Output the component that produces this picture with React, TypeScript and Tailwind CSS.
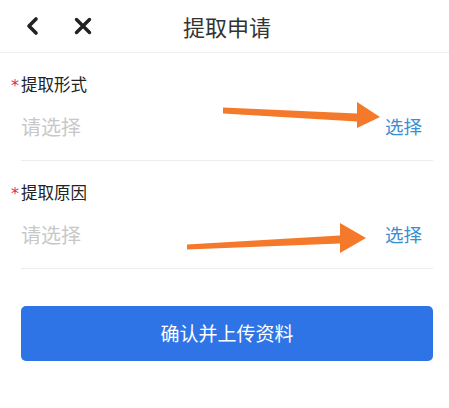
import React from 'react';

const font = { fontFamily: '"Noto Sans CJK SC", "Noto Sans", sans-serif' };

interface FieldProps {
  label: string;
}

const Field: React.FC<FieldProps> = ({ label }) => {
  return (
    <div className="pt-[19px] pb-[13px] border-b border-[#ececec]">
      <div className="flex items-center h-6 -ml-[12px]">
        <span className="w-[12px] text-[16px] text-[#d9304f] leading-none pt-[4px] text-center" style={{ fontFamily: '"DejaVu Sans", sans-serif' }}>*</span>
        <span className="text-[16.5px] text-[#222222]">{label}</span>
      </div>
      <div className="mt-[11px] h-10 flex items-center justify-between pr-[11px]">
        <span className="text-[20px] text-[#c8c8c8]">请选择</span>
        <span className="text-[18.5px] text-[#3a8ed2]">选择</span>
      </div>
    </div>
  );
};

export default function App() {
  return (
    <div className="relative w-[449px] h-[408px] bg-white overflow-hidden" style={font}>
      {/* Header */}
      <div className="h-[53px] border-b border-[#eeeeee] flex items-center relative">
        <div className="flex items-center gap-[33px] pl-[25px]">
          <svg width="16" height="20" viewBox="0 0 16 20">
            <path d="M11 3 L4 10 L11 17" fill="none" stroke="#222" strokeWidth="3.6" strokeLinecap="round" strokeLinejoin="round" />
          </svg>
          <svg width="18" height="18" viewBox="0 0 18 18">
            <path d="M2.5 2.5 L15.5 15.5 M15.5 2.5 L2.5 15.5" fill="none" stroke="#222" strokeWidth="3.4" strokeLinecap="round" />
          </svg>
        </div>
        <div className="absolute inset-0 flex items-center justify-center pl-[5px]">
          <span className="text-[22px] text-[#333333]">提取申请</span>
        </div>
      </div>

      {/* Form */}
      <div className="pl-[21px] pr-[16px]">
        <Field label="提取形式" />
        <Field label="提取原因" />
        <button className="mt-[37px] w-full h-[55px] rounded-[5px] bg-[#2f74e6] text-white text-[19px] flex items-center justify-center">
          确认并上传资料
        </button>
      </div>

      {/* Annotation arrows */}
      <svg className="absolute inset-0 pointer-events-none" width="449" height="408" viewBox="0 0 449 408">
        <polygon points="223,107.5 357,113.5 357,102 380,117 357,128 357,121.5 223,113.5" fill="#f5792a" />
        <polygon points="187,244.5 340,235.5 340,223 366,238 340,253 340,243.5 187,249.5" fill="#f5792a" />
      </svg>
    </div>
  );
}
